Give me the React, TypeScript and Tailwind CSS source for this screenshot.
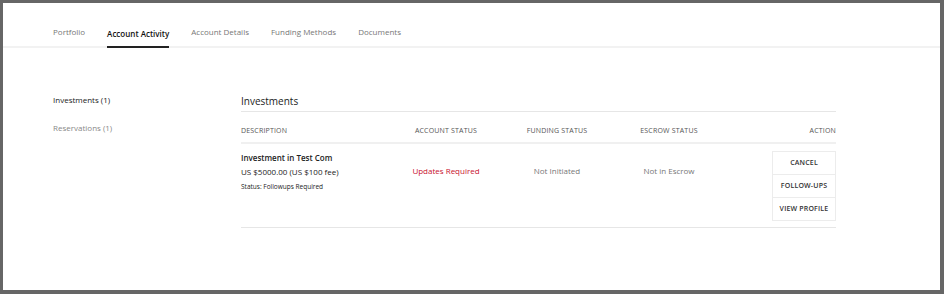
import React from 'react';

const tabs = ['Portfolio', 'Account Activity', 'Account Details', 'Funding Methods', 'Documents'];

export default function App() {
  return (
    <div className="w-[944px] h-[294px] bg-[#666666] pt-[3px] pl-[3px] pr-1 pb-1 font-['Open_Sans',sans-serif]">
      <div className="h-full bg-white">
        {/* tabs */}
        <div className="h-[45px] border-b-2 border-[#f2f2f2] flex items-end pl-[50px] gap-[22px]">
          {tabs.map((t) => (
            <div
              key={t}
              className={
                t === 'Account Activity'
                  ? 'pb-[6px] text-[8px] font-semibold text-[#111] border-b-2 border-[#222] mb-[-2px]'
                  : 'pb-[8px] text-[8px] text-[#777]'
              }
            >
              {t}
            </div>
          ))}
        </div>

        <div className="flex pl-[50px] pt-[46px]">
          {/* left nav */}
          <div className="w-[188px] flex flex-col gap-[16px] text-[8px]">
            <div className="text-[#222]">Investments (1)</div>
            <div className="text-[#888]">Reservations (1)</div>
          </div>

          {/* main */}
          <div className="w-[595px]">
            <div className="text-[10px] text-[#222] pb-[2px] border-b border-[#e6e6e6]">Investments</div>
            <div className="grid grid-cols-[150px_110px_112px_112px_1fr] text-[7px] leading-[10px] text-[#555] tracking-wide pt-[14px] pb-[6px] border-b-2 border-[#f0f0f0]">
              <div>DESCRIPTION</div>
              <div className="text-center">ACCOUNT STATUS</div>
              <div className="text-center">FUNDING STATUS</div>
              <div className="text-center">ESCROW STATUS</div>
              <div className="text-right">ACTION</div>
            </div>
            <div className="grid grid-cols-[150px_110px_112px_112px_1fr] border-b border-[#e6e6e6] pt-[7px] pb-[6px]">
              <div className="flex flex-col">
                <div className="text-[8px] font-semibold text-[#222] leading-[14px]">Investment in Test Com</div>
                <div className="text-[8px] text-[#222] leading-[14px]">US $5000.00 (US $100 fee)</div>
                <div className="text-[6.5px] text-[#222] leading-[16px]">Status: Followups Required</div>
              </div>
              <div className="text-center text-[8px] text-[#c8102e] pt-[14px]">Updates Required</div>
              <div className="text-center text-[8px] text-[#777] pt-[14px]">Not Initiated</div>
              <div className="text-center text-[8px] text-[#777] pt-[14px]">Not in Escrow</div>
              <div className="flex justify-end">
                <div className="w-[64px] border border-[#ececec] flex flex-col text-[7px] font-semibold text-[#333] tracking-wide">
                  <div className="h-[23px] flex items-center justify-center border-b border-[#ececec]">CANCEL</div>
                  <div className="h-[23px] flex items-center justify-center border-b border-[#ececec]">FOLLOW-UPS</div>
                  <div className="h-[22px] flex items-center justify-center">VIEW PROFILE</div>
                </div>
              </div>
            </div>
          </div>
        </div>
      </div>
    </div>
  );
}
